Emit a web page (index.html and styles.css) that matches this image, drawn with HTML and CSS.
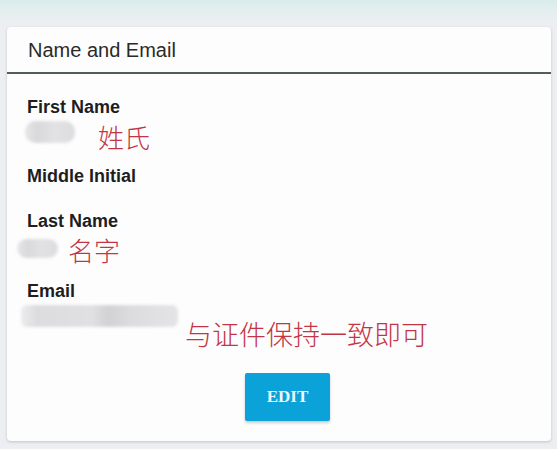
FILE: index.html
```html
<!DOCTYPE html>
<html>
<head>
    <title>Name and Email</title>
    <link rel="stylesheet" href="styles.css">
</head>
<body>
    <div class="card">
        <div class="card-header">Name and Email</div>

        <div class="card-body">
            <div class="field">
                <div class="field-label">First Name</div>
                <div class="field-value first">
                    <span class="masked"></span>
                    <span class="note">姓氏</span>
                </div>
            </div>

            <div class="field empty">
                <div class="field-label">Middle Initial</div>
            </div>

            <div class="field">
                <div class="field-label">Last Name</div>
                <div class="field-value last">
                    <span class="masked"></span>
                    <span class="note">名字</span>
                </div>
            </div>

            <div class="field">
                <div class="field-label">Email</div>
                <div class="field-value email">
                    <span class="masked"></span>
                    <span class="note">与证件保持一致即可</span>
                </div>
            </div>

            <div class="actions">
                <button class="edit-btn">EDIT</button>
            </div>
        </div>
    </div>
</body>
</html>
```

FILE: styles.css
```css
body {
    margin: 0;
    padding: 27px 6px 7px 7px;
    font-family: 'Liberation Sans', Arial, sans-serif;
    background: linear-gradient(to bottom, #d9ecec 0px, #e4eeef 10px, #eceef2 22px, #eceef1 100%);
    min-height: 415px;
}

.card {
    background-color: #fefdfe;
    border-radius: 4px;
    box-shadow: 0 1px 3px rgba(0, 0, 0, 0.18);
}

.card-header {
    font-size: 20px;
    line-height: 24px;
    color: #2a2a2a;
    padding: 11px 21px 10px 21px;
    border-bottom: 2px solid #545c5e;
}

.card-body {
    padding: 22px 20px 20px 20px;
}

.field {
    margin-bottom: 22px;
}

.field.empty {
    margin-bottom: 23px;
}

.field-label {
    font-size: 18px;
    line-height: 22px;
    font-weight: bold;
    color: #1e1e1e;
}

.field-value {
    display: flex;
    align-items: flex-start;
    height: 22px;
    margin-top: 3px;
}

.masked {
    display: block;
    height: 22px;
    border-radius: 10px;
    background: linear-gradient(to right, #e6e6e8 0%, #d9d9db 25%, #e2e2e4 60%, #dcdcde 100%);
    filter: blur(1.5px);
}

.note {
    font-family: 'Noto Sans CJK SC', sans-serif;
    font-weight: 300;
    font-size: 26px;
    line-height: 26px;
    color: #c23545;
    white-space: nowrap;
}

.first .masked {
    width: 50px;
    margin-left: -2px;
}

.first .note {
    margin-left: 23px;
    margin-top: 3px;
}

.last {
    margin-top: 7px;
    height: 19px;
}

.last .masked {
    width: 41px;
    height: 19px;
    margin-left: -10px;
}

.last .note {
    margin-left: 10px;
    margin-top: -2px;
}

.email .masked {
    width: 157px;
    margin-left: -6px;
    border-radius: 6px;
    background: linear-gradient(to right, #ececee 0%, #dcdcde 10%, #e0e0e2 45%, #d2d2d4 55%, #dcdcde 70%, #e4e4e6 100%);
}

.email .note {
    font-size: 27px;
    line-height: 27px;
    margin-left: 7px;
    margin-top: 15px;
}

.actions {
    margin-top: 46px;
    padding-left: 218px;
}

.edit-btn {
    width: 85px;
    height: 48px;
    border: none;
    border-radius: 2px;
    background-color: #0ba1d9;
    color: #eef8fc;
    font-family: 'Liberation Serif', 'Times New Roman', serif;
    font-weight: bold;
    font-size: 17px;
    box-shadow: 0 2px 3px rgba(0, 0, 0, 0.2);
    cursor: pointer;
}
```
